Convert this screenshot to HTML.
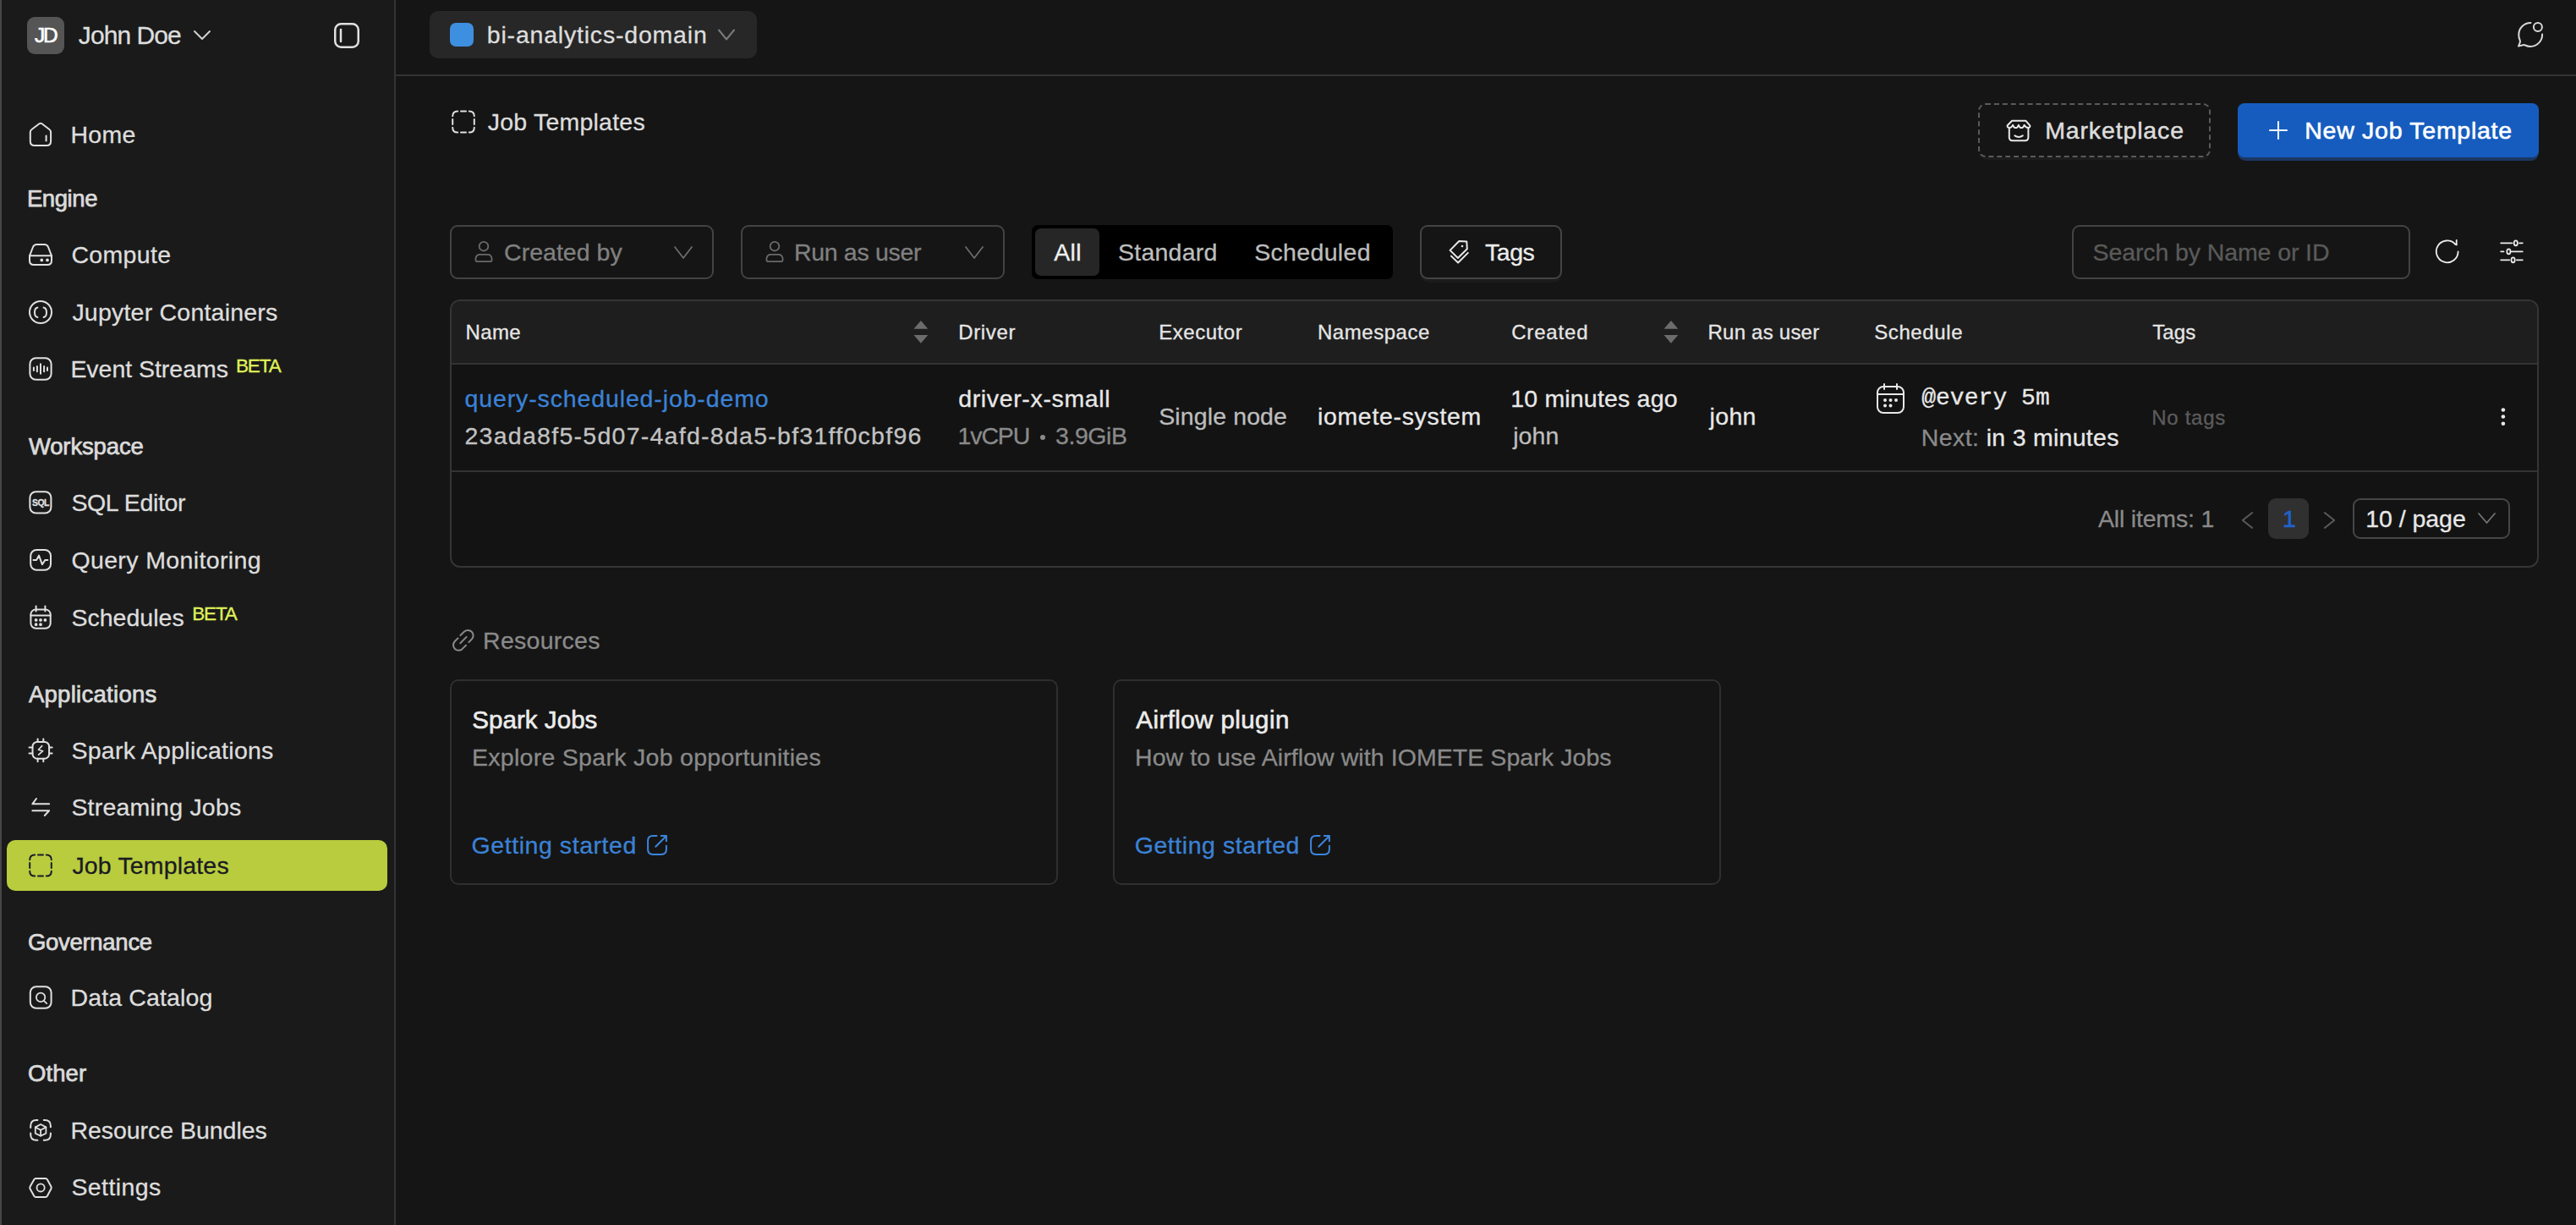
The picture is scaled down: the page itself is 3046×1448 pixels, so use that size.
<!DOCTYPE html>
<html><head><meta charset="utf-8"><title>Job Templates</title>
<style>
html,body{margin:0;padding:0;width:3046px;height:1448px;overflow:hidden;background:#161616;font-family:'Liberation Sans', sans-serif;}
.t{position:absolute;white-space:nowrap;}
</style></head><body>
<div style="position:absolute;left:0px;top:0px;width:3046px;height:1448px;background:#151515;z-index:0"></div>
<div style="position:absolute;left:0px;top:0px;width:466px;height:1448px;background:#1a1a1a;z-index:0"></div>
<div style="position:absolute;left:0px;top:0px;width:2px;height:1448px;background:#474747;z-index:1"></div>
<div style="position:absolute;left:466px;top:0px;width:2px;height:1448px;background:#333333;z-index:1"></div>
<div style="position:absolute;left:468px;top:88px;width:2578px;height:2px;background:#333333;z-index:1"></div>
<div style="position:absolute;left:32px;top:20px;width:44px;height:44px;background:#555555;border-radius:9px;z-index:2"></div>
<svg style="position:absolute;left:226px;top:30px;z-index:4;overflow:visible" width="26" height="22" viewBox="0 0 26 22" fill="none" stroke="#d0d0d0" stroke-width="2" stroke-linecap="round" stroke-linejoin="round" ><polyline points="4,7 13,16 22,7"/></svg>
<svg style="position:absolute;left:392px;top:24px;z-index:4;overflow:visible" width="36" height="36" viewBox="0 0 36 36" fill="none" stroke="#e0e0e0" stroke-width="2.5" stroke-linecap="round" stroke-linejoin="round" ><rect x="4.25" y="4.25" width="27.5" height="27.5" rx="7"/><line x1="11" y1="11" x2="11" y2="25"/></svg>
<div style="position:absolute;left:8px;top:993px;width:450px;height:60px;background:#b8cc3e;border-radius:10px;z-index:2"></div>
<svg style="position:absolute;left:32px;top:143.4px;z-index:4;overflow:visible" width="32" height="32.0" viewBox="0 0 32 32.0" fill="none" stroke="#e0e0e0" stroke-width="2" stroke-linecap="round" stroke-linejoin="round" color="#e0e0e0"><path d="M3.8 13.2Q3.8 11.2 5.5 10L14.4 3.3Q16 2.2 17.6 3.3L26.4 10Q28.1 11.2 28.1 13.2V24Q28.1 29 23.1 29H8.8Q3.8 29 3.8 24Z"/><line x1="22.6" y1="17.6" x2="22.6" y2="23.4"/></svg>
<svg style="position:absolute;left:32px;top:285px;z-index:4;overflow:visible" width="32" height="32" viewBox="0 0 32 32" fill="none" stroke="#e0e0e0" stroke-width="2" stroke-linecap="round" stroke-linejoin="round" color="#e0e0e0"><path d="M3 17.3L7 7Q8.2 4 11.5 4H20.5Q23.8 4 25 7L29 17.3V23Q29 28 24 28H8Q3 28 3 23Z"/><line x1="3" y1="17.3" x2="29" y2="17.3"/><circle cx="17.3" cy="22.4" r="0.9" fill="currentColor"/><circle cx="24" cy="22.4" r="0.9" fill="currentColor"/></svg>
<svg style="position:absolute;left:32px;top:352.7px;z-index:4;overflow:visible" width="32" height="32.0" viewBox="0 0 32 32.0" fill="none" stroke="#e0e0e0" stroke-width="2" stroke-linecap="round" stroke-linejoin="round" color="#e0e0e0"><circle cx="16" cy="16" r="13"/><path d="M12.4 10.6Q9 11.2 9 16.3Q9 21.5 12.4 22.1"/><path d="M19.6 10.6Q23 11.2 23 16.3Q23 21.5 19.6 22.1"/></svg>
<svg style="position:absolute;left:32px;top:420.4px;z-index:4;overflow:visible" width="32" height="32.0" viewBox="0 0 32 32.0" fill="none" stroke="#e0e0e0" stroke-width="2" stroke-linecap="round" stroke-linejoin="round" color="#e0e0e0"><rect x="3.4" y="3.2" width="25.2" height="25.6" rx="7"/><line x1="7.9" y1="14.6" x2="7.9" y2="17.9"/><line x1="11.9" y1="13" x2="11.9" y2="19.3"/><line x1="16" y1="10.3" x2="16" y2="21.7"/><line x1="20.1" y1="13" x2="20.1" y2="19.3"/><line x1="24" y1="14.6" x2="24" y2="17.9"/></svg>
<svg style="position:absolute;left:32px;top:578.4px;z-index:4;overflow:visible" width="32" height="32.0" viewBox="0 0 32 32.0" fill="none" stroke="#e0e0e0" stroke-width="2" stroke-linecap="round" stroke-linejoin="round" color="#e0e0e0"><rect x="3.4" y="3.2" width="25" height="25.4" rx="7"/><text x="16" y="20.3" text-anchor="middle" font-family="Liberation Sans" font-weight="700" font-size="11" fill="#e0e0e0" stroke="#e0e0e0" stroke-width="0.3" letter-spacing="-0.6" transform="translate(16 16) scale(0.95 1) translate(-16 -16)">SQL</text></svg>
<svg style="position:absolute;left:32px;top:646px;z-index:4;overflow:visible" width="32" height="32" viewBox="0 0 32 32" fill="none" stroke="#e0e0e0" stroke-width="2" stroke-linecap="round" stroke-linejoin="round" color="#e0e0e0"><rect x="4.2" y="4" width="23.8" height="23.8" rx="7"/><polyline points="7.5,15.9 11.2,15.9 14,10.6 17.9,21.2 21.4,15.9 24.4,15.9"/></svg>
<svg style="position:absolute;left:32px;top:713.6px;z-index:4;overflow:visible" width="32" height="32.0" viewBox="0 0 32 32.0" fill="none" stroke="#e0e0e0" stroke-width="2" stroke-linecap="round" stroke-linejoin="round" color="#e0e0e0"><rect x="4.4" y="6.4" width="23.3" height="22.3" rx="6"/><line x1="4.4" y1="13.6" x2="27.7" y2="13.6"/><line x1="10.6" y1="2.6" x2="10.6" y2="8.4"/><line x1="21.4" y1="2.6" x2="21.4" y2="8.4"/><circle cx="10.6" cy="18.9" r="0.9" fill="currentColor"/><circle cx="16" cy="18.9" r="0.9" fill="currentColor"/><circle cx="21.4" cy="18.9" r="0.9" fill="currentColor"/><circle cx="10.6" cy="24.2" r="0.9" fill="currentColor"/><circle cx="16" cy="24.2" r="0.9" fill="currentColor"/></svg>
<svg style="position:absolute;left:32px;top:870.7px;z-index:4;overflow:visible" width="32" height="32.0" viewBox="0 0 32 32.0" fill="none" stroke="#e0e0e0" stroke-width="2" stroke-linecap="round" stroke-linejoin="round" color="#e0e0e0"><rect x="6.5" y="5.9" width="19.6" height="19.8" rx="5.5"/><line x1="12.6" y1="2.4" x2="12.6" y2="5.9"/><line x1="19.3" y1="2.4" x2="19.3" y2="5.9"/><line x1="12.6" y1="25.7" x2="12.6" y2="29.3"/><line x1="19.3" y1="25.7" x2="19.3" y2="29.3"/><line x1="2.5" y1="12.4" x2="6.5" y2="12.4"/><line x1="2.5" y1="19.4" x2="6.5" y2="19.4"/><line x1="26.1" y1="12.4" x2="29.6" y2="12.4"/><line x1="26.1" y1="19.4" x2="29.6" y2="19.4"/><polyline points="17.7,10.6 13.4,15.3 18.7,16.7 13.6,21.2" stroke-width="1.6"/></svg>
<svg style="position:absolute;left:32px;top:938.4px;z-index:4;overflow:visible" width="32" height="32.0" viewBox="0 0 32 32.0" fill="none" stroke="#e0e0e0" stroke-width="2" stroke-linecap="round" stroke-linejoin="round" color="#e0e0e0"><polyline points="11,6 6.3,12.3 26.1,12.3"/><polyline points="6.3,20.3 26.1,20.3 20.8,26"/></svg>
<svg style="position:absolute;left:32px;top:1006.5999999999999px;z-index:4;overflow:visible" width="32" height="32.0" viewBox="0 0 32 32.0" fill="none" stroke="#1b1b2b" stroke-width="2" stroke-linecap="round" stroke-linejoin="round" color="#1b1b2b"><path d="M3.2 9.3Q3.2 3.4 9.2 3.4"/><line x1="13" y1="3.4" x2="19" y2="3.4"/><path d="M22.8 3.4Q28.8 3.4 28.8 9.3"/><line x1="28.8" y1="13" x2="28.8" y2="19"/><path d="M28.8 22.7Q28.8 28.6 22.8 28.6"/><line x1="19" y1="28.6" x2="13" y2="28.6"/><path d="M9.2 28.6Q3.2 28.6 3.2 22.7"/><line x1="3.2" y1="19" x2="3.2" y2="13"/></svg>
<svg style="position:absolute;left:24px;top:1153px;z-index:4;overflow:visible" width="50" height="50" viewBox="0 0 50 50" fill="none" stroke="#e0e0e0" stroke-width="2" stroke-linecap="round" stroke-linejoin="round" ><rect x="11.8" y="13.2" width="24.8" height="25.6" rx="7"/><circle cx="24.1" cy="25.9" r="5.2" stroke-width="1.8"/><line x1="28.3" y1="30.3" x2="31.2" y2="33.1" stroke-width="1.8"/></svg>
<svg style="position:absolute;left:24px;top:1310px;z-index:4;overflow:visible" width="50" height="50" viewBox="0 0 50 50" fill="none" stroke="#e0e0e0" stroke-width="2" stroke-linecap="round" stroke-linejoin="round" ><path d="M12.2 22.9V21Q12.2 14.1 19.1 14.1H20.4"/><path d="M27.8 14.1H29Q35.9 14.1 35.9 21V22.2"/><path d="M35.9 29.4V31Q35.9 37.8 29 37.8H27.8"/><path d="M20.4 37.8H19.1Q12.2 37.8 12.2 31V29.4"/><path d="M24.1 19L30.4 22.4V29.6L24.1 32.8L17.8 29.6V22.4Z" stroke-width="1.8"/><polyline points="17.8,22.4 24.1,25.8 30.4,22.4" stroke-width="1.8"/><line x1="24.1" y1="25.8" x2="24.1" y2="32.6" stroke-width="1.8"/></svg>
<svg style="position:absolute;left:24px;top:1379px;z-index:4;overflow:visible" width="50" height="50" viewBox="0 0 50 50" fill="none" stroke="#e0e0e0" stroke-width="2" stroke-linecap="round" stroke-linejoin="round" ><path d="M11.6 23.6L16.3 15.3Q17 14.1 18.4 14.1H29.8Q31.2 14.1 31.9 15.3L36.4 23.6Q37.1 24.9 36.4 26.2L31.9 34.7Q31.2 35.9 29.8 35.9H18.4Q17 35.9 16.3 34.7L11.6 26.2Q10.9 24.9 11.6 23.6Z"/><circle cx="24.1" cy="24.9" r="4.6" stroke-width="1.8"/></svg>
<div style="position:absolute;left:508px;top:13px;width:387px;height:56px;background:#272727;border-radius:10px;z-index:2"></div>
<div style="position:absolute;left:532px;top:27px;width:28px;height:28px;background:#3d8fe0;border-radius:7px;z-index:3"></div>
<svg style="position:absolute;left:846px;top:30px;z-index:4;overflow:visible" width="26" height="22" viewBox="0 0 26 22" fill="none" stroke="#7a7a7a" stroke-width="2" stroke-linecap="round" stroke-linejoin="round" ><polyline points="4,5.5 13,16.5 22,5.5"/></svg>
<svg style="position:absolute;left:2966px;top:16px;z-index:4;overflow:visible" width="50" height="50" viewBox="0 0 50 50" fill="none" stroke="#d8d8d8" stroke-width="2" stroke-linecap="round" stroke-linejoin="round" ><path d="M26.5 10.9A14 14 0 0 0 12.3 24.9Q12.3 28.5 13.5 31Q14.3 32.8 13.6 34.6L12 38.6L17.2 37.2Q18.7 36.8 20 37.5Q22.8 38.9 26.1 38.9A14 14 0 0 0 40.1 24.5"/><circle cx="34.9" cy="15.9" r="5"/></svg>
<svg style="position:absolute;left:532px;top:128px;z-index:4;overflow:visible" width="32" height="32" viewBox="0 0 32 32" fill="none" stroke="#e0e0e0" stroke-width="2" stroke-linecap="round" stroke-linejoin="round" ><path d="M3.2 9.3Q3.2 3.4 9.2 3.4"/><line x1="13" y1="3.4" x2="19" y2="3.4"/><path d="M22.8 3.4Q28.8 3.4 28.8 9.3"/><line x1="28.8" y1="13" x2="28.8" y2="19"/><path d="M28.8 22.7Q28.8 28.6 22.8 28.6"/><line x1="19" y1="28.6" x2="13" y2="28.6"/><path d="M9.2 28.6Q3.2 28.6 3.2 22.7"/><line x1="3.2" y1="19" x2="3.2" y2="13"/></svg>
<div style="position:absolute;left:2339px;top:122px;width:275px;height:67px;background:#1d1d1d;border-radius:10px;z-index:1"></div>
<div style="position:absolute;left:2339px;top:122px;width:275px;height:64px;border:2px dashed #5a5a5a;border-radius:9px;box-sizing:border-box;background:#151515;z-index:2"></div>
<svg style="position:absolute;left:2362px;top:132px;z-index:4;overflow:visible" width="50" height="50" viewBox="0 0 50 50" fill="none" stroke="#e8e8e8" stroke-width="2" stroke-linecap="round" stroke-linejoin="round" ><path d="M13.8 19.2V30.3Q13.8 34.3 17.8 34.3H32.4Q36.4 34.3 36.4 30.3V19.2"/><path d="M17.1 10.8H33.5L38.3 16.3Q38.9 18.8 36.3 18.9Q33.3 19 31.6 15.8Q30.3 19.1 28.2 19.1Q26.2 19.1 24.9 15.8Q23.6 19.1 21.5 19.1Q19.4 19.1 18.1 15.8Q16.6 19 13.8 18.9Q11 18.8 11.7 16.3Z"/><path d="M20.4 28.4Q25 31.6 29.8 28.4"/></svg>
<div style="position:absolute;left:2646px;top:122px;width:356px;height:68px;background:#1c3763;border-radius:9px;z-index:1"></div>
<div style="position:absolute;left:2646px;top:122px;width:356px;height:64px;background:#165cbf;border-radius:8px;z-index:2"></div>
<svg style="position:absolute;left:2680px;top:140px;z-index:4;overflow:visible" width="28" height="28" viewBox="0 0 28 28" fill="none" stroke="#ffffff" stroke-width="2" stroke-linecap="round" stroke-linejoin="round" ><line x1="14" y1="4" x2="14" y2="24"/><line x1="4" y1="14" x2="24" y2="14"/></svg>
<div style="position:absolute;left:532px;top:266px;width:312px;height:64px;border:2px solid #434343;border-radius:9px;box-sizing:border-box;z-index:2"></div>
<svg style="position:absolute;left:550px;top:273px;z-index:4;overflow:visible" width="50" height="50" viewBox="0 0 50 50" fill="none" stroke="#6a6a6a" stroke-width="2" stroke-linecap="round" stroke-linejoin="round" ><circle cx="22" cy="18.2" r="5.3" stroke-width="1.8"/><path d="M17.5 27.8H26.5Q31 27.8 31.6 33Q31.8 36.2 29.5 36.2H14.5Q12.2 36.2 12.4 33Q13 27.8 17.5 27.8Z" stroke-width="1.8"/></svg>
<svg style="position:absolute;left:796px;top:289.5px;z-index:4;overflow:visible" width="24" height="17.0" viewBox="0 0 24 17.0" fill="none" stroke="#6e6e6e" stroke-width="1.7" stroke-linecap="round" stroke-linejoin="round" ><polyline points="2,2 12.0,15 22,2"/></svg>
<div style="position:absolute;left:876px;top:266px;width:312px;height:64px;border:2px solid #434343;border-radius:9px;box-sizing:border-box;z-index:2"></div>
<svg style="position:absolute;left:894px;top:273px;z-index:4;overflow:visible" width="50" height="50" viewBox="0 0 50 50" fill="none" stroke="#6a6a6a" stroke-width="2" stroke-linecap="round" stroke-linejoin="round" ><circle cx="22" cy="18.2" r="5.3" stroke-width="1.8"/><path d="M17.5 27.8H26.5Q31 27.8 31.6 33Q31.8 36.2 29.5 36.2H14.5Q12.2 36.2 12.4 33Q13 27.8 17.5 27.8Z" stroke-width="1.8"/></svg>
<svg style="position:absolute;left:1140px;top:289.5px;z-index:4;overflow:visible" width="24" height="17.0" viewBox="0 0 24 17.0" fill="none" stroke="#6e6e6e" stroke-width="1.7" stroke-linecap="round" stroke-linejoin="round" ><polyline points="2,2 12.0,15 22,2"/></svg>
<div style="position:absolute;left:1220px;top:266px;width:427px;height:64px;background:#000000;border-radius:7px;z-index:2"></div>
<div style="position:absolute;left:1224px;top:270px;width:76px;height:56px;background:#262626;border-radius:7px;z-index:3"></div>
<div style="position:absolute;left:1679px;top:266px;width:168px;height:68px;background:#1c1c1c;border-radius:10px;z-index:1"></div>
<div style="position:absolute;left:1679px;top:266px;width:168px;height:64px;border:2px solid #444444;border-radius:9px;box-sizing:border-box;background:#151515;z-index:2"></div>
<svg style="position:absolute;left:1700px;top:273px;z-index:4;overflow:visible" width="50" height="50" viewBox="0 0 50 50" fill="none" stroke="#e8e8e8" stroke-width="2" stroke-linecap="round" stroke-linejoin="round" ><path d="M14.6 22.9L25.3 12L34.3 12.5L34.8 21.3L23.9 32Z"/><polyline points="15.9,29.6 24.1,37.5 35.8,25.9"/><circle cx="29" cy="18" r="1.3" fill="#e8e8e8" stroke="none"/></svg>
<div style="position:absolute;left:2450px;top:266px;width:400px;height:64px;border:2px solid #434343;border-radius:9px;box-sizing:border-box;z-index:2"></div>
<svg style="position:absolute;left:2869px;top:273px;z-index:4;overflow:visible" width="50" height="50" viewBox="0 0 50 50" fill="none" stroke="#ececec" stroke-width="1.8" stroke-linecap="round" stroke-linejoin="round" ><path d="M37.6 24.5A12.9 12.9 0 1 1 34.2 15.6"/><polyline points="35.7,11 35.7,16.3 30.8,16.3" stroke-width="0"/><line x1="35.7" y1="11" x2="35.7" y2="16.3"/><path d="M34.2 15.6L35.7 16.3"/></svg>
<svg style="position:absolute;left:2945px;top:273px;z-index:4;overflow:visible" width="50" height="50" viewBox="0 0 50 50" fill="none" stroke="#ececec" stroke-width="1.8" stroke-linecap="round" stroke-linejoin="round" ><line x1="12.2" y1="14.3" x2="25.6" y2="14.3"/><line x1="34" y1="14.3" x2="37.8" y2="14.3"/><ellipse cx="29.8" cy="14.3" rx="2.1" ry="3"/><line x1="12.2" y1="24.3" x2="15.5" y2="24.3"/><line x1="24.6" y1="24.3" x2="37.8" y2="24.3"/><ellipse cx="21.4" cy="24.3" rx="2.1" ry="3"/><line x1="12.2" y1="34.3" x2="22.2" y2="34.3"/><line x1="30.8" y1="34.3" x2="37.8" y2="34.3"/><ellipse cx="26.6" cy="34.3" rx="2.1" ry="3"/></svg>
<div style="position:absolute;left:532px;top:354px;width:2470px;height:316.5px;border:2px solid #353535;border-radius:12px;box-sizing:border-box;background:#131313;z-index:1"></div>
<div style="position:absolute;left:534px;top:356px;width:2466px;height:73px;background:#1e1e1e;border-radius:10px 10px 0 0;z-index:2"></div>
<div style="position:absolute;left:534px;top:429px;width:2466px;height:2px;background:#333333;z-index:2"></div>
<div style="position:absolute;left:534px;top:556px;width:2466px;height:2px;background:#333333;z-index:2"></div>
<svg style="position:absolute;left:1064px;top:368px;z-index:4;overflow:visible" width="50" height="50" viewBox="0 0 50 50" fill="#6c6c6c" stroke="none" stroke-width="0" stroke-linecap="round" stroke-linejoin="round" ><path d="M24.9 11L33.3 20.8H16.5Z"/><path d="M16.5 28H33.3L24.9 37.8Z"/></svg>
<svg style="position:absolute;left:1951px;top:368px;z-index:4;overflow:visible" width="50" height="50" viewBox="0 0 50 50" fill="#6c6c6c" stroke="none" stroke-width="0" stroke-linecap="round" stroke-linejoin="round" ><path d="M24.9 11L33.3 20.8H16.5Z"/><path d="M16.5 28H33.3L24.9 37.8Z"/></svg>
<div style="position:absolute;left:1229.8px;top:513.5px;width:6.400000000000091px;height:6.399999999999977px;background:#8a8a8a;border-radius:50%;z-index:3"></div>
<svg style="position:absolute;left:2216px;top:451px;z-index:4;overflow:visible" width="40" height="40" viewBox="0 0 40 40" fill="none" stroke="#e8e8e8" stroke-width="2" stroke-linecap="round" stroke-linejoin="round" ><rect x="4" y="6" width="31" height="31" rx="7"/><line x1="4" y1="15" x2="35" y2="15"/><line x1="12" y1="3" x2="12" y2="9"/><line x1="27" y1="3" x2="27" y2="9"/><circle cx="13" cy="22" r="1" fill="#e8e8e8"/><circle cx="19.5" cy="22" r="1" fill="#e8e8e8"/><circle cx="26" cy="22" r="1" fill="#e8e8e8"/><circle cx="13" cy="28.5" r="1" fill="#e8e8e8"/><circle cx="19.5" cy="28.5" r="1" fill="#e8e8e8"/></svg>
<svg style="position:absolute;left:2935px;top:468px;z-index:4;overflow:visible" width="50" height="50" viewBox="0 0 50 50" fill="#e8e8e8" stroke="none" stroke-width="0" stroke-linecap="round" stroke-linejoin="round" ><circle cx="24.9" cy="16.5" r="2.3"/><circle cx="24.9" cy="24.5" r="2.3"/><circle cx="24.9" cy="32.7" r="2.3"/></svg>
<svg style="position:absolute;left:2630px;top:585px;z-index:4;overflow:visible" width="50" height="60" viewBox="0 0 50 60" fill="none" stroke="#5a5a5a" stroke-width="2" stroke-linecap="round" stroke-linejoin="round" ><polyline points="33.2,21 21.8,30 33.2,39"/></svg>
<div style="position:absolute;left:2682px;top:589px;width:48px;height:48px;background:#303030;border-radius:9px;z-index:2"></div>
<svg style="position:absolute;left:2730px;top:585px;z-index:4;overflow:visible" width="50" height="60" viewBox="0 0 50 60" fill="none" stroke="#5a5a5a" stroke-width="2" stroke-linecap="round" stroke-linejoin="round" ><polyline points="18.8,21 30.2,30 18.8,39"/></svg>
<div style="position:absolute;left:2782px;top:589px;width:186px;height:48px;border:2px solid #474747;border-radius:9px;box-sizing:border-box;z-index:2"></div>
<svg style="position:absolute;left:2929px;top:605px;z-index:4;overflow:visible" width="23" height="15" viewBox="0 0 23 15" fill="none" stroke="#777777" stroke-width="1.7" stroke-linecap="round" stroke-linejoin="round" ><polyline points="2,2 11.5,13 21,2"/></svg>
<svg style="position:absolute;left:526px;top:731px;z-index:4;overflow:visible" width="50" height="50" viewBox="0 0 50 50" fill="none" stroke="#8a8a8a" stroke-width="2" stroke-linecap="round" stroke-linejoin="round" ><path d="M18.4 20L23.05 15.55A6.3 6.3 0 0 1 31.95 24.45L28.3 28.1"/><path d="M15.5 23.4L11.65 27.25A6.3 6.3 0 0 0 20.55 36.15L25 31.7"/><line x1="18.3" y1="29.2" x2="25.6" y2="21.9"/></svg>
<div style="position:absolute;left:532px;top:803px;width:719px;height:243px;border:2px solid #2f2f2f;border-radius:10px;box-sizing:border-box;z-index:2"></div>
<svg style="position:absolute;left:752px;top:974px;z-index:4;overflow:visible" width="49" height="50" viewBox="0 0 49 50" fill="none" stroke="#3b86dc" stroke-width="2" stroke-linecap="round" stroke-linejoin="round" ><path d="M24.5 14.1H20Q14.1 14.1 14.1 20V30Q14.1 35.9 20 35.9H30Q35.9 35.9 35.9 30V25.7"/><line x1="23.3" y1="26.7" x2="35.3" y2="14.7"/><polyline points="29.8,14.1 35.9,14.1 35.9,20.2"/></svg>
<div style="position:absolute;left:1316px;top:803px;width:719px;height:243px;border:2px solid #2f2f2f;border-radius:10px;box-sizing:border-box;z-index:2"></div>
<svg style="position:absolute;left:1536px;top:974px;z-index:4;overflow:visible" width="49" height="50" viewBox="0 0 49 50" fill="none" stroke="#3b86dc" stroke-width="2" stroke-linecap="round" stroke-linejoin="round" ><path d="M24.5 14.1H20Q14.1 14.1 14.1 20V30Q14.1 35.9 20 35.9H30Q35.9 35.9 35.9 30V25.7"/><line x1="23.3" y1="26.7" x2="35.3" y2="14.7"/><polyline points="29.8,14.1 35.9,14.1 35.9,20.2"/></svg>
<span id="t0" class="t" style="left:41.0px;top:29.8px;font-size:24.5px;line-height:24.5px;color:#ffffff;font-family:'Liberation Sans', sans-serif;font-weight:400;letter-spacing:-2.250px;-webkit-text-stroke:0.6px #ffffff;z-index:5;">JD</span>
<span id="t1" class="t" style="left:92.8px;top:27.0px;font-size:30px;line-height:30px;color:#dddddd;font-family:'Liberation Sans', sans-serif;font-weight:400;letter-spacing:-0.920px;-webkit-text-stroke:0.3px #dddddd;z-index:5;">John Doe</span>
<span id="t2" class="t" style="left:31.9px;top:221.0px;font-size:27.5px;line-height:27.5px;color:#dadada;font-family:'Liberation Sans', sans-serif;font-weight:400;letter-spacing:-0.417px;-webkit-text-stroke:0.75px #dadada;z-index:5;">Engine</span>
<span id="t3" class="t" style="left:33.9px;top:514.0px;font-size:27.5px;line-height:27.5px;color:#dadada;font-family:'Liberation Sans', sans-serif;font-weight:400;letter-spacing:-0.137px;-webkit-text-stroke:0.75px #dadada;z-index:5;">Workspace</span>
<span id="t4" class="t" style="left:33.9px;top:806.7px;font-size:27.5px;line-height:27.5px;color:#dadada;font-family:'Liberation Sans', sans-serif;font-weight:400;letter-spacing:0.283px;-webkit-text-stroke:0.75px #dadada;z-index:5;">Applications</span>
<span id="t5" class="t" style="left:32.9px;top:1099.7px;font-size:27.5px;line-height:27.5px;color:#dadada;font-family:'Liberation Sans', sans-serif;font-weight:400;letter-spacing:-0.285px;-webkit-text-stroke:0.75px #dadada;z-index:5;">Governance</span>
<span id="t6" class="t" style="left:32.9px;top:1255.4px;font-size:27.5px;line-height:27.5px;color:#dadada;font-family:'Liberation Sans', sans-serif;font-weight:400;letter-spacing:0.133px;-webkit-text-stroke:0.75px #dadada;z-index:5;">Other</span>
<span id="t7" class="t" style="left:83.4px;top:145.3px;font-size:28.5px;line-height:28.5px;color:#dddddd;font-family:'Liberation Sans', sans-serif;font-weight:400;letter-spacing:0.342px;-webkit-text-stroke:0.3px #dddddd;z-index:5;">Home</span>
<span id="t8" class="t" style="left:84.4px;top:286.9px;font-size:28.5px;line-height:28.5px;color:#dddddd;font-family:'Liberation Sans', sans-serif;font-weight:400;letter-spacing:0.351px;-webkit-text-stroke:0.3px #dddddd;z-index:5;">Compute</span>
<span id="t9" class="t" style="left:85.4px;top:354.6px;font-size:28.5px;line-height:28.5px;color:#dddddd;font-family:'Liberation Sans', sans-serif;font-weight:400;letter-spacing:0.220px;-webkit-text-stroke:0.3px #dddddd;z-index:5;">Jupyter Containers</span>
<span id="t10" class="t" style="left:83.4px;top:422.3px;font-size:28.5px;line-height:28.5px;color:#dddddd;font-family:'Liberation Sans', sans-serif;font-weight:400;letter-spacing:-0.030px;-webkit-text-stroke:0.3px #dddddd;z-index:5;">Event Streams</span>
<span id="t11" class="t" style="left:84.4px;top:580.3px;font-size:28.5px;line-height:28.5px;color:#dddddd;font-family:'Liberation Sans', sans-serif;font-weight:400;letter-spacing:-0.356px;-webkit-text-stroke:0.3px #dddddd;z-index:5;">SQL Editor</span>
<span id="t12" class="t" style="left:84.4px;top:647.9px;font-size:28.5px;line-height:28.5px;color:#dddddd;font-family:'Liberation Sans', sans-serif;font-weight:400;letter-spacing:0.371px;-webkit-text-stroke:0.3px #dddddd;z-index:5;">Query Monitoring</span>
<span id="t13" class="t" style="left:84.4px;top:715.5px;font-size:28.5px;line-height:28.5px;color:#dddddd;font-family:'Liberation Sans', sans-serif;font-weight:400;letter-spacing:0.020px;-webkit-text-stroke:0.3px #dddddd;z-index:5;">Schedules</span>
<span id="t14" class="t" style="left:84.4px;top:872.6px;font-size:28.5px;line-height:28.5px;color:#dddddd;font-family:'Liberation Sans', sans-serif;font-weight:400;letter-spacing:0.265px;-webkit-text-stroke:0.3px #dddddd;z-index:5;">Spark Applications</span>
<span id="t15" class="t" style="left:84.4px;top:940.3px;font-size:28.5px;line-height:28.5px;color:#dddddd;font-family:'Liberation Sans', sans-serif;font-weight:400;letter-spacing:0.218px;-webkit-text-stroke:0.3px #dddddd;z-index:5;">Streaming Jobs</span>
<span id="t16" class="t" style="left:85.4px;top:1008.5px;font-size:28.5px;line-height:28.5px;color:#1b1b22;font-family:'Liberation Sans', sans-serif;font-weight:400;letter-spacing:0.166px;-webkit-text-stroke:0.3px #1b1b22;z-index:5;">Job Templates</span>
<span id="t17" class="t" style="left:83.4px;top:1164.9px;font-size:28.5px;line-height:28.5px;color:#dddddd;font-family:'Liberation Sans', sans-serif;font-weight:400;letter-spacing:0.154px;-webkit-text-stroke:0.3px #dddddd;z-index:5;">Data Catalog</span>
<span id="t18" class="t" style="left:83.4px;top:1321.6px;font-size:28.5px;line-height:28.5px;color:#dddddd;font-family:'Liberation Sans', sans-serif;font-weight:400;letter-spacing:-0.036px;-webkit-text-stroke:0.3px #dddddd;z-index:5;">Resource Bundles</span>
<span id="t19" class="t" style="left:84.4px;top:1389.3px;font-size:28.5px;line-height:28.5px;color:#dddddd;font-family:'Liberation Sans', sans-serif;font-weight:400;letter-spacing:0.410px;-webkit-text-stroke:0.3px #dddddd;z-index:5;">Settings</span>
<span id="t20" class="t" style="left:278.9px;top:421.9px;font-size:22.5px;line-height:22.5px;color:#e0f25a;font-family:'Liberation Sans', sans-serif;font-weight:400;letter-spacing:-1.063px;-webkit-text-stroke:0.3px #e0f25a;z-index:5;">BETA</span>
<span id="t21" class="t" style="left:227.2px;top:714.8px;font-size:22.5px;line-height:22.5px;color:#e0f25a;font-family:'Liberation Sans', sans-serif;font-weight:400;letter-spacing:-1.163px;-webkit-text-stroke:0.3px #e0f25a;z-index:5;">BETA</span>
<span id="t22" class="t" style="left:575.8px;top:26.7px;font-size:28.5px;line-height:28.5px;color:#dddddd;font-family:'Liberation Sans', sans-serif;font-weight:400;letter-spacing:0.802px;-webkit-text-stroke:0.3px #dddddd;z-index:5;">bi-analytics-domain</span>
<span id="t23" class="t" style="left:576.8px;top:130.1px;font-size:28.5px;line-height:28.5px;color:#dddddd;font-family:'Liberation Sans', sans-serif;font-weight:400;letter-spacing:0.216px;-webkit-text-stroke:0.3px #dddddd;z-index:5;">Job Templates</span>
<span id="t24" class="t" style="left:2418.2px;top:140.4px;font-size:28.5px;line-height:28.5px;color:#dddddd;font-family:'Liberation Sans', sans-serif;font-weight:400;letter-spacing:0.862px;-webkit-text-stroke:0.5px #dddddd;z-index:5;">Marketplace</span>
<span id="t25" class="t" style="left:2725.3px;top:140.4px;font-size:28.5px;line-height:28.5px;color:#ffffff;font-family:'Liberation Sans', sans-serif;font-weight:400;letter-spacing:0.720px;-webkit-text-stroke:0.6px #ffffff;z-index:5;">New Job Template</span>
<span id="t26" class="t" style="left:596.1px;top:283.9px;font-size:28.5px;line-height:28.5px;color:#808080;font-family:'Liberation Sans', sans-serif;font-weight:400;letter-spacing:0.015px;-webkit-text-stroke:0.3px #808080;z-index:5;">Created by</span>
<span id="t27" class="t" style="left:938.9px;top:283.9px;font-size:28.5px;line-height:28.5px;color:#808080;font-family:'Liberation Sans', sans-serif;font-weight:400;letter-spacing:-0.307px;-webkit-text-stroke:0.3px #808080;z-index:5;">Run as user</span>
<span id="t28" class="t" style="left:1246.2px;top:283.9px;font-size:28.5px;line-height:28.5px;color:#f0f0f0;font-family:'Liberation Sans', sans-serif;font-weight:400;letter-spacing:0.379px;-webkit-text-stroke:0.3px #f0f0f0;z-index:5;">All</span>
<span id="t29" class="t" style="left:1322.0px;top:283.9px;font-size:28.5px;line-height:28.5px;color:#bdbdbd;font-family:'Liberation Sans', sans-serif;font-weight:400;letter-spacing:0.240px;-webkit-text-stroke:0.3px #bdbdbd;z-index:5;">Standard</span>
<span id="t30" class="t" style="left:1483.2px;top:283.9px;font-size:28.5px;line-height:28.5px;color:#bdbdbd;font-family:'Liberation Sans', sans-serif;font-weight:400;letter-spacing:0.332px;-webkit-text-stroke:0.3px #bdbdbd;z-index:5;">Scheduled</span>
<span id="t31" class="t" style="left:1755.9px;top:283.9px;font-size:28.5px;line-height:28.5px;color:#ececec;font-family:'Liberation Sans', sans-serif;font-weight:400;letter-spacing:-0.417px;-webkit-text-stroke:0.3px #ececec;z-index:5;">Tags</span>
<span id="t32" class="t" style="left:2474.6px;top:284.2px;font-size:28.5px;line-height:28.5px;color:#5a5a5a;font-family:'Liberation Sans', sans-serif;font-weight:400;letter-spacing:-0.108px;-webkit-text-stroke:0.3px #5a5a5a;z-index:5;">Search by Name or ID</span>
<span id="t33" class="t" style="left:550.4px;top:380.5px;font-size:24px;line-height:24px;color:#e6e6e6;font-family:'Liberation Sans', sans-serif;font-weight:400;letter-spacing:0.409px;-webkit-text-stroke:0.3px #e6e6e6;z-index:5;">Name</span>
<span id="t34" class="t" style="left:1133.2px;top:380.5px;font-size:24px;line-height:24px;color:#e6e6e6;font-family:'Liberation Sans', sans-serif;font-weight:400;letter-spacing:0.639px;-webkit-text-stroke:0.3px #e6e6e6;z-index:5;">Driver</span>
<span id="t35" class="t" style="left:1370.2px;top:380.5px;font-size:24px;line-height:24px;color:#e6e6e6;font-family:'Liberation Sans', sans-serif;font-weight:400;letter-spacing:0.540px;-webkit-text-stroke:0.3px #e6e6e6;z-index:5;">Executor</span>
<span id="t36" class="t" style="left:1557.9px;top:380.5px;font-size:24px;line-height:24px;color:#e6e6e6;font-family:'Liberation Sans', sans-serif;font-weight:400;letter-spacing:0.561px;-webkit-text-stroke:0.3px #e6e6e6;z-index:5;">Namespace</span>
<span id="t37" class="t" style="left:1787.2px;top:380.5px;font-size:24px;line-height:24px;color:#e6e6e6;font-family:'Liberation Sans', sans-serif;font-weight:400;letter-spacing:0.827px;-webkit-text-stroke:0.3px #e6e6e6;z-index:5;">Created</span>
<span id="t38" class="t" style="left:2019.5px;top:380.5px;font-size:24px;line-height:24px;color:#e6e6e6;font-family:'Liberation Sans', sans-serif;font-weight:400;letter-spacing:0.229px;-webkit-text-stroke:0.3px #e6e6e6;z-index:5;">Run as user</span>
<span id="t39" class="t" style="left:2216.2px;top:380.5px;font-size:24px;line-height:24px;color:#e6e6e6;font-family:'Liberation Sans', sans-serif;font-weight:400;letter-spacing:0.610px;-webkit-text-stroke:0.3px #e6e6e6;z-index:5;">Schedule</span>
<span id="t40" class="t" style="left:2545.2px;top:380.5px;font-size:24px;line-height:24px;color:#e6e6e6;font-family:'Liberation Sans', sans-serif;font-weight:400;letter-spacing:0.135px;-webkit-text-stroke:0.3px #e6e6e6;z-index:5;">Tags</span>
<span id="t41" class="t" style="left:549.5px;top:456.5px;font-size:28.5px;line-height:28.5px;color:#3b82d6;font-family:'Liberation Sans', sans-serif;font-weight:400;letter-spacing:0.875px;-webkit-text-stroke:0.3px #3b82d6;z-index:5;">query-scheduled-job-demo</span>
<span id="t42" class="t" style="left:549.5px;top:500.7px;font-size:28.5px;line-height:28.5px;color:#c2c2c2;font-family:'Liberation Sans', sans-serif;font-weight:400;letter-spacing:1.268px;-webkit-text-stroke:0.3px #c2c2c2;z-index:5;">23ada8f5-5d07-4afd-8da5-bf31ff0cbf96</span>
<span id="t43" class="t" style="left:1133.2px;top:456.5px;font-size:28.5px;line-height:28.5px;color:#e8e8e8;font-family:'Liberation Sans', sans-serif;font-weight:400;letter-spacing:0.649px;-webkit-text-stroke:0.3px #e8e8e8;z-index:5;">driver-x-small</span>
<span id="t44" class="t" style="left:1132.6px;top:500.7px;font-size:28.5px;line-height:28.5px;color:#8a8a8a;font-family:'Liberation Sans', sans-serif;font-weight:400;letter-spacing:-1.148px;-webkit-text-stroke:0.3px #8a8a8a;z-index:5;">1vCPU</span>
<span id="t45" class="t" style="left:1248.0px;top:500.7px;font-size:28.5px;line-height:28.5px;color:#8a8a8a;font-family:'Liberation Sans', sans-serif;font-weight:400;letter-spacing:-0.424px;-webkit-text-stroke:0.3px #8a8a8a;z-index:5;">3.9GiB</span>
<span id="t46" class="t" style="left:1370.2px;top:478.4px;font-size:28.5px;line-height:28.5px;color:#bdbdbd;font-family:'Liberation Sans', sans-serif;font-weight:400;letter-spacing:0.121px;-webkit-text-stroke:0.3px #bdbdbd;z-index:5;">Single node</span>
<span id="t47" class="t" style="left:1557.9px;top:478.4px;font-size:28.5px;line-height:28.5px;color:#e8e8e8;font-family:'Liberation Sans', sans-serif;font-weight:400;letter-spacing:0.679px;-webkit-text-stroke:0.3px #e8e8e8;z-index:5;">iomete-system</span>
<span id="t48" class="t" style="left:1786.2px;top:456.5px;font-size:28.5px;line-height:28.5px;color:#e8e8e8;font-family:'Liberation Sans', sans-serif;font-weight:400;letter-spacing:0.190px;-webkit-text-stroke:0.3px #e8e8e8;z-index:5;">10 minutes ago</span>
<span id="t49" class="t" style="left:1789.2px;top:500.7px;font-size:28.5px;line-height:28.5px;color:#bdbdbd;font-family:'Liberation Sans', sans-serif;font-weight:400;letter-spacing:0.056px;-webkit-text-stroke:0.3px #bdbdbd;z-index:5;">john</span>
<span id="t50" class="t" style="left:2021.5px;top:478.4px;font-size:28.5px;line-height:28.5px;color:#e8e8e8;font-family:'Liberation Sans', sans-serif;font-weight:400;letter-spacing:0.356px;-webkit-text-stroke:0.3px #e8e8e8;z-index:5;">john</span>
<span id="t51" class="t" style="left:2272.2px;top:456.5px;font-size:28px;line-height:28px;color:#e8e8e8;font-family:'Liberation Mono', monospace;font-weight:400;letter-spacing:0.035px;-webkit-text-stroke:0.3px #e8e8e8;z-index:5;">@every 5m</span>
<span id="t52" class="t" style="left:2271.8px;top:502.7px;font-size:28.5px;line-height:28.5px;color:#8a8a8a;font-family:'Liberation Sans', sans-serif;font-weight:400;letter-spacing:0.425px;-webkit-text-stroke:0.3px #8a8a8a;z-index:5;">Next:</span>
<span id="t53" class="t" style="left:2348.7px;top:502.7px;font-size:28.5px;line-height:28.5px;color:#e8e8e8;font-family:'Liberation Sans', sans-serif;font-weight:400;letter-spacing:0.281px;-webkit-text-stroke:0.3px #e8e8e8;z-index:5;">in 3 minutes</span>
<span id="t54" class="t" style="left:2544.2px;top:482.2px;font-size:24px;line-height:24px;color:#5c5c5c;font-family:'Liberation Sans', sans-serif;font-weight:400;letter-spacing:0.715px;-webkit-text-stroke:0.3px #5c5c5c;z-index:5;">No tags</span>
<span id="t55" class="t" style="left:2481.0px;top:598.9px;font-size:28.5px;line-height:28.5px;color:#8a8a8a;font-family:'Liberation Sans', sans-serif;font-weight:400;letter-spacing:-0.193px;-webkit-text-stroke:0.3px #8a8a8a;z-index:5;">All items: 1</span>
<span id="t56" class="t" style="left:2699.1px;top:599.0px;font-size:28.5px;line-height:28.5px;color:#1f63cc;font-family:'Liberation Sans', sans-serif;font-weight:400;-webkit-text-stroke:0.6px #1f63cc;z-index:5;">1</span>
<span id="t57" class="t" style="left:2797.2px;top:598.9px;font-size:28.5px;line-height:28.5px;color:#e8e8e8;font-family:'Liberation Sans', sans-serif;font-weight:400;letter-spacing:-0.038px;-webkit-text-stroke:0.3px #e8e8e8;z-index:5;">10 / page</span>
<span id="t58" class="t" style="left:571.1px;top:743.1px;font-size:28.5px;line-height:28.5px;color:#8a8a8a;font-family:'Liberation Sans', sans-serif;font-weight:400;letter-spacing:0.266px;-webkit-text-stroke:0.3px #8a8a8a;z-index:5;">Resources</span>
<span id="t59" class="t" style="left:558.3px;top:836.3px;font-size:29.5px;line-height:29.5px;color:#ececec;font-family:'Liberation Sans', sans-serif;font-weight:400;letter-spacing:0.053px;-webkit-text-stroke:0.6px #ececec;z-index:5;">Spark Jobs</span>
<span id="t60" class="t" style="left:557.9px;top:881.1px;font-size:28.5px;line-height:28.5px;color:#8a8a8a;font-family:'Liberation Sans', sans-serif;font-weight:400;letter-spacing:0.296px;-webkit-text-stroke:0.3px #8a8a8a;z-index:5;">Explore Spark Job opportunities</span>
<span id="t61" class="t" style="left:557.6px;top:984.5px;font-size:28.5px;line-height:28.5px;color:#3b82d6;font-family:'Liberation Sans', sans-serif;font-weight:400;letter-spacing:0.558px;-webkit-text-stroke:0.3px #3b82d6;z-index:5;">Getting started</span>
<span id="t62" class="t" style="left:1343.3px;top:836.3px;font-size:29.5px;line-height:29.5px;color:#ececec;font-family:'Liberation Sans', sans-serif;font-weight:400;letter-spacing:0.428px;-webkit-text-stroke:0.6px #ececec;z-index:5;">Airflow plugin</span>
<span id="t63" class="t" style="left:1342.0px;top:881.1px;font-size:28.5px;line-height:28.5px;color:#8a8a8a;font-family:'Liberation Sans', sans-serif;font-weight:400;letter-spacing:0.072px;-webkit-text-stroke:0.3px #8a8a8a;z-index:5;">How to use Airflow with IOMETE Spark Jobs</span>
<span id="t64" class="t" style="left:1341.7px;top:984.5px;font-size:28.5px;line-height:28.5px;color:#3b82d6;font-family:'Liberation Sans', sans-serif;font-weight:400;letter-spacing:0.558px;-webkit-text-stroke:0.3px #3b82d6;z-index:5;">Getting started</span>
</body></html>
